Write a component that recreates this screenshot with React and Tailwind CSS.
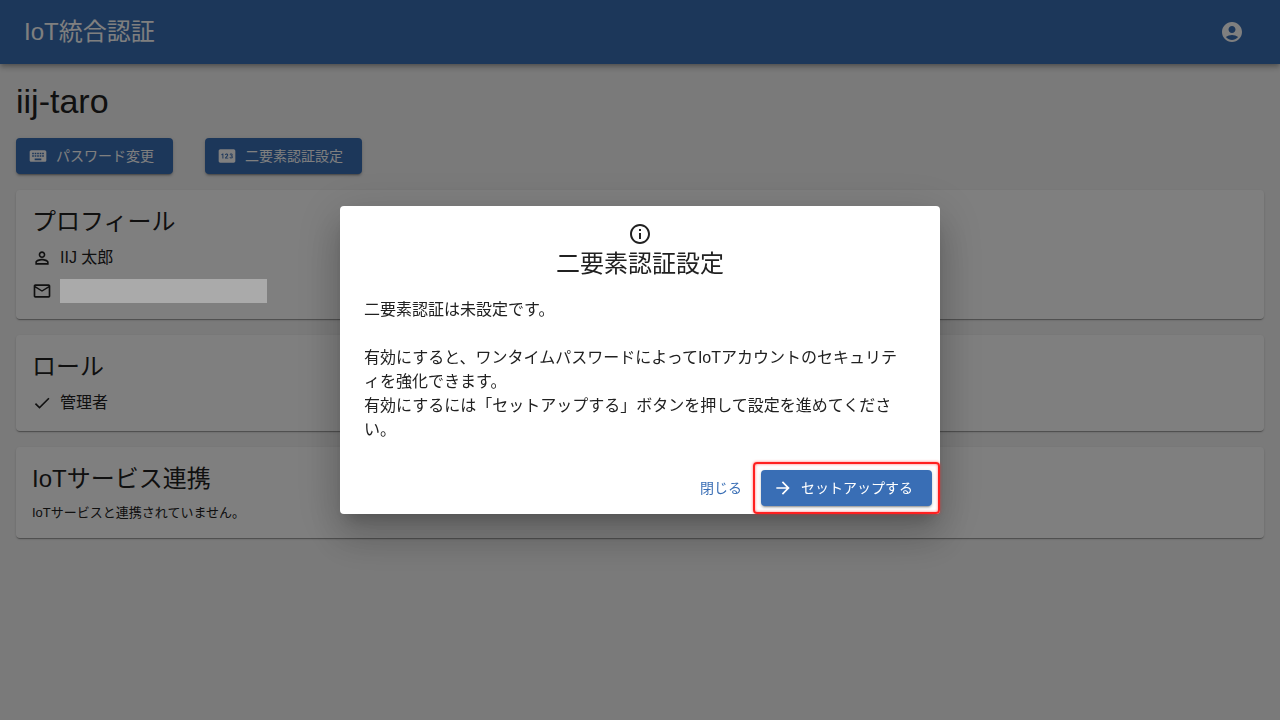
import {
  MdArrowForward,
  MdCheck,
  MdInfoOutline,
  MdKeyboard,
  MdMailOutline,
  MdPersonOutline,
  MdPin,
} from 'react-icons/md';

function AccountIcon() {
  return (
    <svg viewBox="0 0 24 24" className="size-6 fill-current" aria-hidden="true">
      <path d="M12 2C6.48 2 2 6.48 2 12s4.48 10 10 10 10-4.48 10-10S17.52 2 12 2zm0 4c1.93 0 3.5 1.57 3.5 3.5S13.93 13 12 13s-3.5-1.57-3.5-3.5S10.07 6 12 6zm0 14c-2.03 0-4.43-.82-6.14-2.88C7.55 15.8 9.68 15 12 15s4.45.8 6.14 2.12C16.43 19.18 14.03 20 12 20z" />
    </svg>
  );
}

function ContainedButton({ icon: Icon, children, className = '' }) {
  return (
    <button
      type="button"
      className={`flex h-9 items-center gap-2 rounded bg-[#396eb5] pl-3 pr-4 text-sm text-white shadow-[0_3px_1px_-2px_rgba(0,0,0,0.2),0_2px_2px_0_rgba(0,0,0,0.14),0_1px_5px_0_rgba(0,0,0,0.12)] ${className}`}
    >
      <Icon className="size-5 shrink-0" />
      {children}
    </button>
  );
}

function Card({ title, children }) {
  return (
    <section className="rounded bg-white p-4 shadow-[0_2px_1px_-1px_rgba(0,0,0,0.2),0_1px_1px_0_rgba(0,0,0,0.14),0_1px_3px_0_rgba(0,0,0,0.12)]">
      <h2 className="mb-2 text-2xl leading-8">{title}</h2>
      {children}
    </section>
  );
}

function SetupDialog() {
  return (
    <div className="fixed inset-0 z-10 flex items-center justify-center bg-black/50">
      <div
        role="dialog"
        aria-modal="true"
        aria-labelledby="dialog-title"
        className="w-full max-w-[600px] rounded bg-white shadow-[0_11px_15px_-7px_rgba(0,0,0,0.2),0_24px_38px_3px_rgba(0,0,0,0.14),0_9px_46px_8px_rgba(0,0,0,0.12)]"
      >
        <div className="flex flex-col items-center px-6 py-4">
          <MdInfoOutline className="size-6" />
          <h2 id="dialog-title" className="text-2xl leading-9">
            二要素認証設定
          </h2>
        </div>
        <div className="pb-5 pl-6 pr-9 text-base">
          <p>二要素認証は未設定です。</p>
          <br />
          <p>有効にすると、ワンタイムパスワードによってIoTアカウントのセキュリティを強化できます。</p>
          <p>有効にするには「セットアップする」ボタンを押して設定を進めてください。</p>
        </div>
        <div className="flex items-center justify-end gap-2 p-2">
          <button type="button" className="h-9 min-w-16 px-2 text-sm text-[#396eb5]">
            閉じる
          </button>
          <div className="relative">
            <ContainedButton icon={MdArrowForward} className="min-w-[171px]">
              セットアップする
            </ContainedButton>
            {/* highlight frame */}
            <span className="pointer-events-none absolute -inset-2 rounded border-2 border-[#ff2020] shadow-[0_0_3px_rgba(255,32,32,0.6),inset_0_0_3px_rgba(255,32,32,0.6)]" />
          </div>
        </div>
      </div>
    </div>
  );
}

export default function App() {
  return (
    <div
      lang="ja"
      className="min-h-screen bg-[#f5f5f5] font-['Liberation_Sans','Noto_Sans_CJK_JP',sans-serif] text-[#212121]"
    >
      <header className="relative flex h-16 items-center justify-between bg-[#396eb5] px-6 text-white shadow-[0_2px_4px_-1px_rgba(0,0,0,0.2),0_4px_5px_0_rgba(0,0,0,0.14),0_1px_10px_0_rgba(0,0,0,0.12)]">
        <span className="text-2xl">IoT統合認証</span>
        <button type="button" aria-label="アカウント" className="rounded-full p-3">
          <AccountIcon />
        </button>
      </header>

      <main className="flex flex-col gap-4 p-4">
        <h1 className="text-[34px] leading-[42px]">iij-taro</h1>
        <div className="flex gap-8">
          <ContainedButton icon={MdKeyboard} className="min-w-[157px]">
            パスワード変更
          </ContainedButton>
          <ContainedButton icon={MdPin} className="min-w-[157px]">
            二要素認証設定
          </ContainedButton>
        </div>

        <Card title="プロフィール">
          <div className="flex flex-col gap-[9px]">
            <div className="flex items-center gap-2">
              <MdPersonOutline className="size-5" />
              <span>IIJ 太郎</span>
            </div>
            <div className="flex items-center gap-2">
              <MdMailOutline className="size-5" />
              {/* masked address */}
              <span className="relative z-20 h-6 w-[207px] bg-[#aaaaaa]" />
            </div>
          </div>
        </Card>

        <Card title="ロール">
          <div className="flex items-center gap-2">
            <MdCheck className="size-5" />
            <span>管理者</span>
          </div>
        </Card>

        <Card title="IoTサービス連携">
          <p className="text-[13px] leading-[19px]">IoTサービスと連携されていません。</p>
        </Card>
      </main>

      <SetupDialog />
    </div>
  );
}
